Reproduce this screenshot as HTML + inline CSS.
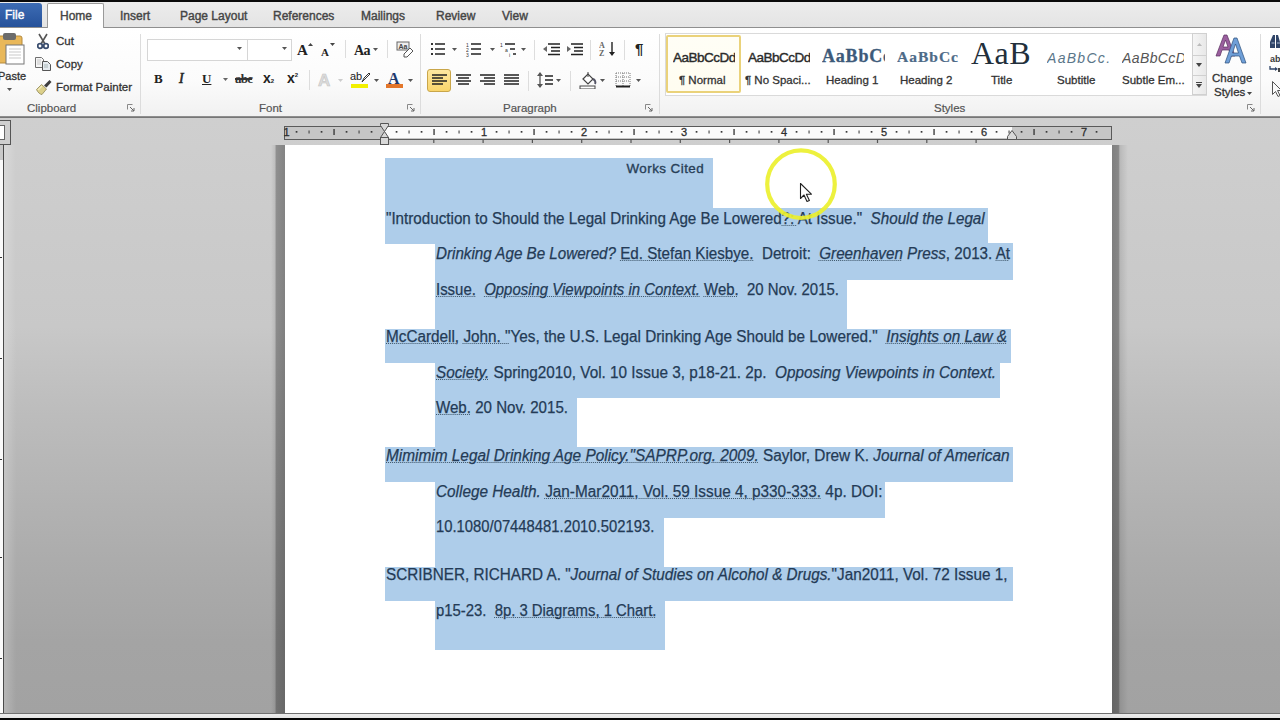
<!DOCTYPE html>
<html><head><meta charset="utf-8">
<style>
*{margin:0;padding:0;box-sizing:border-box}
html,body{width:1280px;height:720px;overflow:hidden;background:#000;font-family:"Liberation Sans",sans-serif}
.a{position:absolute}
#topbar{left:0;top:0;width:1280px;height:3px;background:#0a0a0a}
#tabs{left:0;top:2px;width:1280px;height:26px;background:linear-gradient(#ececec,#e4e4e4);border-bottom:1px solid #8f8f8f}
.tab{position:absolute;top:6px;font-size:12px;color:#454545;white-space:nowrap;-webkit-text-stroke:0.4px #454545}
#filetab{left:0;top:3px;width:42px;height:24px;background:linear-gradient(#3d6cb4,#25519a);border-radius:0 3px 0 0;color:#fff;font-size:12px;padding:5px 0 0 5px;-webkit-text-stroke:0.4px #fff}
#hometab{left:47px;top:3px;width:57px;height:26px;background:#fff;border:1px solid #9a9a9a;border-bottom:none;border-radius:2px 2px 0 0}
#ribbon{left:0;top:28px;width:1280px;height:89px;background:linear-gradient(#ffffff 0%,#fbfbfb 60%,#f1f1f1 100%)}
#ribbonbot{left:0;top:116px;width:1280px;height:2px;background:linear-gradient(#9a9a9a,#6a6a6a)}
.glabel{position:absolute;top:102px;font-size:11.5px;color:#555;-webkit-text-stroke:0.2px #555}
.sep{position:absolute;top:34px;width:1px;height:80px;background:#dcdcdc}
.rl{position:absolute;font-size:11.5px;color:#333;white-space:nowrap;-webkit-text-stroke:0.3px #333}
#canvas{left:0;top:118px;width:1280px;height:596px;background:linear-gradient(#cfcfcf 0%,#c8c8c8 35%,#bcbcbc 50%,#acacac 74%,#a4a4a4 88%,#a2a2a2 100%)}
#botbar{left:0;top:713px;width:1280px;height:7px;background:linear-gradient(#707070 0px,#707070 1px,#ededed 1px,#e4e4e4 5px,#050505 5px)}
#page{left:285px;top:145px;width:827px;height:569px;background:#fff}
#shadowL{left:271px;top:145px;width:14px;height:568px;background:linear-gradient(90deg,rgba(0,0,0,0) 0%,rgba(0,0,0,.08) 30%,rgba(0,0,0,.3) 35%,rgba(0,0,0,.36) 100%)}
#shadowR{left:1112px;top:145px;width:16px;height:568px;background:linear-gradient(90deg,rgba(0,0,0,.38) 0%,rgba(0,0,0,.34) 40%,rgba(0,0,0,.1) 50%,rgba(0,0,0,0) 100%)}
.hl{position:absolute;background:#aecdea}
.ln{position:absolute;font-size:15.6px;color:#243b56;white-space:pre;line-height:1.117;transform-origin:0 0;-webkit-text-stroke:0.25px #243b56}
.i{font-style:italic}
.w{text-decoration:underline dotted #3c5468;text-decoration-thickness:1.2px;text-underline-offset:1px}
</style></head><body>
<div class="a" id="topbar"></div>
<div class="a" id="tabs"></div>
<div class="a" id="filetab">File</div>
<div class="a" id="hometab"></div>
<div class="tab" style="left:60px;top:9px">Home</div>
<div class="tab" style="left:120px;top:9px">Insert</div>
<div class="tab" style="left:180px;top:9px">Page Layout</div>
<div class="tab" style="left:273px;top:9px">References</div>
<div class="tab" style="left:361px;top:9px">Mailings</div>
<div class="tab" style="left:436px;top:9px">Review</div>
<div class="tab" style="left:502px;top:9px">View</div>
<div class="a" id="ribbon"></div>
<div class="a" id="ribbonbot"></div>

<!-- ===== RIBBON CONTENT ===== -->
<!-- separators -->
<div class="sep" style="left:140px"></div>
<div class="sep" style="left:420px"></div>
<div class="sep" style="left:659px"></div>
<div class="sep" style="left:1260px"></div>
<!-- group labels -->
<div class="glabel" style="left:27px">Clipboard</div>
<div class="glabel" style="left:259px">Font</div>
<div class="glabel" style="left:503px">Paragraph</div>
<div class="glabel" style="left:934px">Styles</div>
<!-- dialog launchers -->
<svg class="a" style="left:127px;top:104px" width="8" height="8"><path d="M0.5 0.5h5M0.5 0.5v5" stroke="#888" fill="none"/><path d="M3 3l4 4M7 4v3h-3" stroke="#666" fill="none"/></svg>
<svg class="a" style="left:407px;top:104px" width="8" height="8"><path d="M0.5 0.5h5M0.5 0.5v5" stroke="#888" fill="none"/><path d="M3 3l4 4M7 4v3h-3" stroke="#666" fill="none"/></svg>
<svg class="a" style="left:645px;top:104px" width="8" height="8"><path d="M0.5 0.5h5M0.5 0.5v5" stroke="#888" fill="none"/><path d="M3 3l4 4M7 4v3h-3" stroke="#666" fill="none"/></svg>
<svg class="a" style="left:1247px;top:104px" width="8" height="8"><path d="M0.5 0.5h5M0.5 0.5v5" stroke="#888" fill="none"/><path d="M3 3l4 4M7 4v3h-3" stroke="#666" fill="none"/></svg>

<!-- Clipboard -->
<svg class="a" style="left:0;top:32px" width="28" height="34">
 <rect x="-2" y="4" width="24" height="27" rx="2" fill="#e9b85a" stroke="#b58a3c"/>
 <rect x="3" y="1" width="13" height="7" rx="2" fill="#6b6b6b"/>
 <rect x="6" y="13" width="18" height="19" fill="#fff" stroke="#777"/>
 <path d="M9 17h12M9 20h12M9 23h12M9 26h12" stroke="#c9c9c9"/>
</svg>
<div class="rl" style="left:-2px;top:70px;font-size:11px">Paste</div>
<svg class="a" style="left:7px;top:88px" width="6" height="4"><path d="M0 0h5l-2.5 3z" fill="#555"/></svg>
<svg class="a" style="left:37px;top:33px" width="12" height="17">
 <path d="M2 1l6 10M10 1l-6 10" stroke="#555" stroke-width="1.6"/>
 <circle cx="3" cy="13" r="2.3" fill="none" stroke="#3a4d6e" stroke-width="1.8"/>
 <circle cx="9" cy="13" r="2.3" fill="none" stroke="#3a4d6e" stroke-width="1.8"/>
</svg>
<div class="rl" style="left:56px;top:35px">Cut</div>
<svg class="a" style="left:34px;top:56px" width="18" height="16">
 <path d="M1.5 1.5h6l2 2v8h-8z" fill="#f6f6f6" stroke="#6f6f6f"/>
 <path d="M3 4h4M3 6h4M3 8h4" stroke="#bbb" stroke-width="0.8"/>
 <path d="M8.5 5.5h5l3 3v6h-8z" fill="#e6ebf0" stroke="#555"/>
 <path d="M10 9h4M10 11h4" stroke="#9aa" stroke-width="0.8"/>
</svg>
<div class="rl" style="left:56px;top:58px">Copy</div>
<svg class="a" style="left:35px;top:79px" width="18" height="16">
 <path d="M1.5 10.5l5-5 5 4.5-4.5 5.5c-2 0-4.5-2.5-5.5-5z" fill="#dcd08a" stroke="#8f8757" stroke-width="0.8"/>
 <path d="M3 11l4-4" stroke="#f3ecbf" stroke-width="1.2"/>
 <path d="M9 6.5l5.5-5.5 2 2-5 5.5z" fill="#3d3d3d"/>
</svg>
<div class="rl" style="left:56px;top:81px">Format Painter</div>

<!-- Font group -->
<div class="a" style="left:147px;top:39px;width:101px;height:22px;background:#fff;border:1px solid #d6d6d6"></div>
<div class="a" style="left:248px;top:39px;width:44px;height:22px;background:#fff;border:1px solid #d6d6d6;border-left:none"></div>
<svg class="a" style="left:237px;top:47px" width="6" height="4"><path d="M0 0h5l-2.5 3z" fill="#555"/></svg>
<svg class="a" style="left:282px;top:47px" width="6" height="4"><path d="M0 0h5l-2.5 3z" fill="#555"/></svg>
<div class="a" style="left:297px;top:42px;font:bold 15px 'Liberation Serif',serif;color:#222">A</div>
<svg class="a" style="left:308px;top:43px" width="6" height="4"><path d="M0 3h5l-2.5-3z" fill="#444"/></svg>
<div class="a" style="left:321px;top:46px;font:bold 11px 'Liberation Serif',serif;color:#222">A</div>
<svg class="a" style="left:330px;top:43px" width="6" height="4"><path d="M0 0h5l-2.5 3z" fill="#444"/></svg>
<div class="a" style="left:345px;top:40px;width:1px;height:18px;background:#ddd"></div>
<div class="a" style="left:354px;top:43px;font:bold 14px 'Liberation Serif',serif;color:#222;letter-spacing:-0.5px">Aa</div>
<svg class="a" style="left:373px;top:48px" width="6" height="4"><path d="M0 0h5l-2.5 3z" fill="#555"/></svg>
<div class="a" style="left:387px;top:40px;width:1px;height:18px;background:#ddd"></div>
<svg class="a" style="left:395px;top:40px" width="20" height="18">
 <rect x="2" y="2" width="12" height="8" fill="#eee" stroke="#666"/>
 <text x="3.5" y="9" font-size="7" font-family="Liberation Sans" font-weight="bold" fill="#444">Aa</text>
 <path d="M9 14l6-6 3 3-6 6h-3z" fill="#fff" stroke="#555"/>
</svg>
<div class="a" style="left:154px;top:71px;font:bold 13px 'Liberation Serif',serif;color:#222">B</div>
<div class="a" style="left:179px;top:71px;font:italic 14px 'Liberation Serif',serif;color:#222;-webkit-text-stroke:0.5px #222">I</div>
<div class="a" style="left:202px;top:71px;font:bold 13px 'Liberation Serif',serif;color:#222;text-decoration:underline">U</div>
<svg class="a" style="left:223px;top:78px" width="6" height="4"><path d="M0 0h5l-2.5 3z" fill="#666"/></svg>
<div class="a" style="left:235px;top:71px;font:bold 13px 'Liberation Serif',serif;color:#333;letter-spacing:-0.8px;text-decoration:line-through;text-decoration-thickness:1.5px">abc</div>
<div class="a" style="left:263px;top:70px;font:bold 14px 'Liberation Sans',sans-serif;color:#222">x<span style="font-size:6px">2</span></div>
<div class="a" style="left:287px;top:70px;font:bold 14px 'Liberation Sans',sans-serif;color:#222">x<span style="font-size:6px;vertical-align:6px">2</span></div>
<div class="a" style="left:309px;top:70px;width:1px;height:20px;background:#ddd"></div>
<div class="a" style="left:318px;top:71px;font:bold 17px 'Liberation Sans',sans-serif;color:#dcdcdc;-webkit-text-stroke:0.6px #c4c4c4">A</div>
<svg class="a" style="left:338px;top:79px" width="6" height="4"><path d="M0 0h5l-2.5 3z" fill="#ccc"/></svg>
<div class="a" style="left:350px;top:70px;font:11px 'Liberation Sans',sans-serif;color:#222">ab</div>
<svg class="a" style="left:361px;top:72px" width="9" height="11"><path d="M1 10l2-4 5-5 1 1-5 5z" fill="#fff" stroke="#333"/></svg>
<div class="a" style="left:351px;top:84px;width:17px;height:4px;background:#f2f000"></div>
<svg class="a" style="left:374px;top:79px" width="6" height="4"><path d="M0 0h5l-2.5 3z" fill="#555"/></svg>
<div class="a" style="left:388px;top:70px;font:bold 16px 'Liberation Serif',serif;color:#1f3a6e">A</div>
<div class="a" style="left:386px;top:84px;width:17px;height:4px;background:#e3762b"></div>
<svg class="a" style="left:408px;top:79px" width="6" height="4"><path d="M0 0h5l-2.5 3z" fill="#555"/></svg>

<!-- Paragraph group -->
<svg class="a" style="left:431px;top:42px" width="16" height="14"><path d="M0 1h2v2h-2zM0 6h2v2h-2zM0 11h2v2h-2z" fill="#333"/><path d="M4 2h10M4 7h10M4 12h10" stroke="#222" stroke-width="1.3"/></svg>
<svg class="a" style="left:452px;top:48px" width="6" height="4"><path d="M0 0h5l-2.5 3z" fill="#555"/></svg>
<svg class="a" style="left:466px;top:42px" width="17" height="15"><text x="0" y="5" font-size="5" font-family="Liberation Sans" fill="#333">1</text><text x="0" y="10" font-size="5" font-family="Liberation Sans" fill="#333">2</text><text x="0" y="15" font-size="5" font-family="Liberation Sans" fill="#333">3</text><path d="M5 2h10M5 7h10M5 12h10" stroke="#222" stroke-width="1.3"/></svg>
<svg class="a" style="left:490px;top:48px" width="6" height="4"><path d="M0 0h5l-2.5 3z" fill="#555"/></svg>
<svg class="a" style="left:500px;top:42px" width="18" height="16"><text x="0" y="5" font-size="5" font-family="Liberation Sans" fill="#333">1</text><text x="5" y="10" font-size="5" font-family="Liberation Sans" fill="#333">a</text><text x="9" y="15" font-size="5" font-family="Liberation Sans" fill="#333">i</text><path d="M5 2h10M10 7h5M13 12h3" stroke="#222" stroke-width="1.3"/></svg>
<svg class="a" style="left:521px;top:48px" width="6" height="4"><path d="M0 0h5l-2.5 3z" fill="#555"/></svg>
<div class="a" style="left:534px;top:40px;width:1px;height:20px;background:#ddd"></div>
<svg class="a" style="left:542px;top:41px" width="19" height="16"><path d="M6 3h12M9 6.5h9M9 10h9M6 13.5h12" stroke="#222" stroke-width="1.6"/><path d="M1 8l4-3v6z" fill="#666"/></svg>
<svg class="a" style="left:565px;top:41px" width="19" height="16"><path d="M6 3h12M9 6.5h9M9 10h9M6 13.5h12" stroke="#222" stroke-width="1.6"/><path d="M6 8l-4-3v6z" fill="#666"/></svg>
<div class="a" style="left:590px;top:40px;width:1px;height:20px;background:#ddd"></div>
<svg class="a" style="left:599px;top:41px" width="18" height="16"><text x="0" y="7" font-size="8" font-weight="bold" font-family="Liberation Serif" fill="#666">A</text><text x="0" y="15" font-size="8" font-weight="bold" font-family="Liberation Serif" fill="#666">Z</text><path d="M13 1v12" stroke="#222" stroke-width="1.4"/><path d="M10 11l3 4 3-4z" fill="#222"/></svg>
<div class="a" style="left:624px;top:40px;width:1px;height:20px;background:#ddd"></div>
<div class="a" style="left:635px;top:40px;font:bold 15px 'Liberation Sans',sans-serif;color:#222">¶</div>
<div class="a" style="left:427px;top:69px;width:24px;height:23px;background:linear-gradient(#fde7a1,#f9d56b);border:1px solid #c9a64a;border-radius:3px"></div>
<svg class="a" style="left:431px;top:73px" width="17" height="14"><path d="M1 2h15M1 5h11M1 8h15M1 11h11" stroke="#222" stroke-width="1.5"/></svg>
<svg class="a" style="left:455px;top:73px" width="17" height="14"><path d="M1 2h15M3 5h11M1 8h15M3 11h11" stroke="#222" stroke-width="1.5"/></svg>
<svg class="a" style="left:479px;top:73px" width="17" height="14"><path d="M1 2h15M5 5h11M1 8h15M5 11h11" stroke="#222" stroke-width="1.5"/></svg>
<svg class="a" style="left:503px;top:73px" width="17" height="14"><path d="M1 2h15M1 5h15M1 8h15M1 11h15" stroke="#222" stroke-width="1.5"/></svg>
<div class="a" style="left:528px;top:71px;width:1px;height:20px;background:#ddd"></div>
<svg class="a" style="left:537px;top:71px" width="18" height="18"><path d="M3 2v14" stroke="#555" stroke-width="1.3"/><path d="M0 5l3-4 3 4zM0 13l3 4 3-4z" fill="#555"/><path d="M8 5h8M8 9h8M8 13h8" stroke="#222" stroke-width="1.5"/></svg>
<svg class="a" style="left:556px;top:79px" width="6" height="4"><path d="M0 0h5l-2.5 3z" fill="#555"/></svg>
<div class="a" style="left:570px;top:71px;width:1px;height:20px;background:#ddd"></div>
<svg class="a" style="left:579px;top:71px" width="18" height="18"><path d="M4 8l5-5 5 5-5 5z" fill="#fff" stroke="#444" stroke-width="1.2"/><path d="M9 1v5" stroke="#444"/><path d="M14 8c2 1 3 3 2 5" stroke="#556" stroke-width="2" fill="none"/><rect x="1" y="15" width="15" height="3" fill="#fff" stroke="#444"/></svg>
<svg class="a" style="left:600px;top:79px" width="6" height="4"><path d="M0 0h5l-2.5 3z" fill="#555"/></svg>
<svg class="a" style="left:615px;top:72px" width="16" height="16"><path d="M1 1h14M1 5h14M1 9h14M1 1v14M8 1v14M15 1v14" stroke="#777" stroke-dasharray="1 1" fill="none"/><path d="M1 14.5h14" stroke="#222" stroke-width="2"/></svg>
<svg class="a" style="left:636px;top:79px" width="6" height="4"><path d="M0 0h5l-2.5 3z" fill="#555"/></svg>

<!-- Styles gallery -->
<div class="a" style="left:665px;top:33px;width:542px;height:63px;background:#fff;border:1px solid #dadada"></div>
<div class="a" style="left:666px;top:35px;width:75px;height:58px;background:linear-gradient(#fffef6,#fffdf0);border:2px solid #ead27a;border-radius:2px"></div>
<div class="a" style="left:673px;top:50px;width:62px;overflow:hidden;white-space:nowrap;font:13.5px 'Liberation Sans',sans-serif;color:#2a2a2a;letter-spacing:-0.5px;-webkit-text-stroke:0.4px #2a2a2a">AaBbCcDd</div>
<div class="rl" style="left:679px;top:74px">¶ Normal</div>
<div class="a" style="left:748px;top:50px;width:62px;overflow:hidden;white-space:nowrap;font:13.5px 'Liberation Sans',sans-serif;color:#2a2a2a;letter-spacing:-0.5px;-webkit-text-stroke:0.4px #2a2a2a">AaBbCcDd</div>
<div class="rl" style="left:745px;top:74px">¶ No Spaci...</div>
<div class="a" style="left:822px;top:46px;width:63px;overflow:hidden;white-space:nowrap;font:bold 18px 'Liberation Serif',serif;color:#3d5a7a;letter-spacing:0.8px;-webkit-text-stroke:0.3px #3d5a7a">AaBbCc</div>
<div class="rl" style="left:826px;top:74px">Heading 1</div>
<div class="a" style="left:897px;top:48px;width:62px;overflow:hidden;white-space:nowrap;font:bold 15.5px 'Liberation Serif',serif;color:#4e6b88;letter-spacing:1px;-webkit-text-stroke:0.2px #4e6b88">AaBbCc</div>
<div class="rl" style="left:900px;top:74px">Heading 2</div>
<div class="a" style="left:971px;top:35px;width:63px;overflow:hidden;white-space:nowrap;font:32px 'Liberation Serif',serif;color:#222f3b;letter-spacing:0.5px">AaB</div>
<div class="rl" style="left:991px;top:74px">Title</div>
<div class="a" style="left:1047px;top:50px;width:62px;overflow:hidden;white-space:nowrap;font:italic 14px 'Liberation Sans',sans-serif;color:#5a7689;letter-spacing:1.3px">AaBbCc.</div>
<div class="rl" style="left:1057px;top:74px">Subtitle</div>
<div class="a" style="left:1122px;top:50px;width:62px;overflow:hidden;white-space:nowrap;font:italic 14px 'Liberation Sans',sans-serif;color:#555;letter-spacing:0.4px">AaBbCcDd</div>
<div class="rl" style="left:1122px;top:74px">Subtle Em...</div>
<div class="a" style="left:1192px;top:33px;width:15px;height:62px;background:linear-gradient(90deg,#f5f5f5,#e8e8e8);border:1px solid #d0d0d0"></div>
<div class="a" style="left:1192px;top:55px;width:15px;height:1px;background:#d0d0d0"></div>
<div class="a" style="left:1192px;top:75px;width:15px;height:1px;background:#d0d0d0"></div>
<svg class="a" style="left:1197px;top:43px" width="6" height="4"><path d="M0 3h5l-2.5-3z" fill="#bbb"/></svg>
<svg class="a" style="left:1196px;top:63px" width="7" height="5"><path d="M0 0h6l-3 4z" fill="#444"/></svg>
<svg class="a" style="left:1196px;top:82px" width="7" height="7"><path d="M0 0.5h6" stroke="#444"/><path d="M0 2h6l-3 4z" fill="#444"/></svg>
<!-- Change styles -->
<svg class="a" style="left:1215px;top:34px" width="36" height="31">
 <path d="M1 22h4l2-6h7l2 6h4l-8-21h-3z M8 13l2.5-7 2.5 7z" fill="#9a5f9e" stroke="#5a2e5e" stroke-width="0.7"/>
 <path d="M10 29h4l2.5-7h8l2.5 7h4l-9-25h-3z M17.5 19l3-9 3 9z" fill="#6f9fd8" stroke="#2d4f7a" stroke-width="0.7"/>
</svg>
<div class="rl" style="left:1212px;top:72px">Change</div>
<div class="rl" style="left:1214px;top:86px">Styles</div><svg class="a" style="left:1247px;top:92px" width="6" height="4"><path d="M0 0h5l-2.5 3z" fill="#444"/></svg>
<!-- Editing (cut off) -->
<svg class="a" style="left:1269px;top:34px" width="11" height="15"><path d="M1 14v-6l3-7h2v13z" fill="#2f4468"/><path d="M7 14v-13h2l2 7v6z" fill="#2f4468"/><path d="M2.5 9h3M8 9h3" stroke="#a9b8d0" stroke-width="1.2"/></svg>
<div class="a" style="left:1270px;top:54px;font:bold 9px 'Liberation Sans',sans-serif;color:#3a3a3a">ab</div>
<svg class="a" style="left:1269px;top:65px" width="11" height="8"><path d="M1 1v3h6" stroke="#2f4468" fill="none" stroke-width="1.3"/><path d="M6 2l3 2-3 2z" fill="#2f4468"/><rect x="9" y="3" width="2" height="4" fill="#444"/></svg>
<svg class="a" style="left:1271px;top:80px" width="10" height="17"><path d="M1.5 1.5v13l3-3 2.5 5 2-1-2.5-5h4z" fill="#fafafa" stroke="#555" stroke-width="1"/></svg>


<div class="a" id="canvas"></div>
<div class="a" id="shadowL"></div>
<div class="a" id="shadowR"></div>
<div class="a" id="page"></div>

<!-- highlights -->
<div class="hl" style="left:385px;top:158px;width:328px;height:50px"></div>
<div class="hl" style="left:385px;top:208px;width:603px;height:36px"></div>
<div class="hl" style="left:435px;top:243px;width:578px;height:37px"></div>
<div class="hl" style="left:435px;top:279px;width:412px;height:50px"></div>
<div class="hl" style="left:385px;top:329px;width:626px;height:34px"></div>
<div class="hl" style="left:435px;top:363px;width:565px;height:35px"></div>
<div class="hl" style="left:435px;top:398px;width:142px;height:50px"></div>
<div class="hl" style="left:385px;top:447px;width:628px;height:35px"></div>
<div class="hl" style="left:435px;top:482px;width:450px;height:36px"></div>
<div class="hl" style="left:435px;top:517px;width:229px;height:50px"></div>
<div class="hl" style="left:385px;top:567px;width:628px;height:34px"></div>
<div class="hl" style="left:435px;top:601px;width:230px;height:49px"></div>

<div class="ln" style="left:385.50px;top:209.63px;transform:scaleX(0.9743)">"Introduction to Should the Legal Drinking Age Be Lowered<span class="w">?: </span>At Issue."  <span class="i">Should the Legal</span></div>
<div class="ln" style="left:435.50px;top:245.13px;transform:scaleX(0.9732)"><span class="i">Drinking Age Be Lowered?</span> <span class="w">Ed. Stefan Kiesbye.</span>  Detroit:  <span class="i w">Greenhaven</span><span class="i"> Press</span>, 2013. <span class="w">At</span></div>
<div class="ln" style="left:435.50px;top:280.63px;transform:scaleX(0.9583)"><span class="w">Issue.</span>  <span class="i w">Opposing Viewpoints in Context.</span> <span class="w">Web.</span>  20 Nov. 2015.</div>
<div class="ln" style="left:385.50px;top:328.38px;transform:scaleX(0.9812)"><span class="w">McCardell,</span> <span class="w">John. "</span>Yes, the U.S. Legal Drinking Age Should be Lowered."  <span class="i w">Insights on Law &amp;</span></div>
<div class="ln" style="left:435.50px;top:363.88px;transform:scaleX(0.9811)"><span class="i w">Society.</span> Spring2010, Vol. 10 Issue 3, p18-21. 2p.  <span class="i">Opposing Viewpoints in Context.</span></div>
<div class="ln" style="left:435.50px;top:399.38px;transform:scaleX(0.9677)"><span class="w">Web.</span> 20 Nov. 2015.</div>
<div class="ln" style="left:385.50px;top:447.38px;transform:scaleX(0.9863)"><span class="i w">Mimimim Legal Drinking Age Policy."SAPRP.org. 2009.</span> Saylor, Drew K. <span class="i">Journal of American</span></div>
<div class="ln" style="left:435.50px;top:482.88px;transform:scaleX(0.9835)"><span class="i">College Health.</span> <span class="w">Jan-Mar2011, Vol. 59 Issue 4, p330-333.</span> 4p. DOI:</div>
<div class="ln" style="left:435.50px;top:518.38px;transform:scaleX(0.9497)">10.1080/07448481.2010.502193.</div>
<div class="ln" style="left:385.50px;top:566.13px;transform:scaleX(0.9798)">SCRIBNER, RICHARD A. "<span class="i">Journal of Studies on Alcohol &amp; Drugs.</span>"Jan2011, Vol. 72 Issue 1,</div>
<div class="ln" style="left:435.50px;top:601.63px;transform:scaleX(0.9527)">p15-23.  <span class="w">8p. 3 Diagrams, 1 Chart.</span></div>

<!-- horizontal ruler -->
<div class="a" style="left:284px;top:125.5px;width:828px;height:14px;background:#c6c6c6;border-top:1.5px solid #5a5a5a;border-bottom:1.5px solid #5a5a5a"></div>
<div class="a" style="left:385px;top:127px;width:627px;height:11px;background:#fbfbfb"></div>
<div class="a" style="left:284px;top:126px;width:1px;height:13px;background:#5a5a5a"></div>
<div class="a" style="left:1111px;top:126px;width:1px;height:13px;background:#5a5a5a"></div>
<svg class="a" style="left:0;top:119px" width="1280" height="30"><rect x="295.70" y="12" width="1.7" height="1.7" fill="#3a3a3a"/><rect x="308.50" y="11.5" width="1.1" height="3" fill="#444"/><rect x="320.70" y="12" width="1.7" height="1.7" fill="#3a3a3a"/><rect x="333.40" y="10" width="1.3" height="6" fill="#333"/><rect x="345.70" y="12" width="1.7" height="1.7" fill="#3a3a3a"/><rect x="358.50" y="11.5" width="1.1" height="3" fill="#444"/><rect x="370.70" y="12" width="1.7" height="1.7" fill="#3a3a3a"/><rect x="395.70" y="12" width="1.7" height="1.7" fill="#3a3a3a"/><rect x="408.50" y="11.5" width="1.1" height="3" fill="#444"/><rect x="420.70" y="12" width="1.7" height="1.7" fill="#3a3a3a"/><rect x="433.40" y="10" width="1.3" height="6" fill="#333"/><rect x="445.70" y="12" width="1.7" height="1.7" fill="#3a3a3a"/><rect x="458.50" y="11.5" width="1.1" height="3" fill="#444"/><rect x="470.70" y="12" width="1.7" height="1.7" fill="#3a3a3a"/><text x="484.00" y="17" font-size="11" font-family="Liberation Sans" text-anchor="middle" fill="#2e2e2e" stroke="#2e2e2e" stroke-width="0.3">1</text><rect x="495.70" y="12" width="1.7" height="1.7" fill="#3a3a3a"/><rect x="508.50" y="11.5" width="1.1" height="3" fill="#444"/><rect x="520.70" y="12" width="1.7" height="1.7" fill="#3a3a3a"/><rect x="533.40" y="10" width="1.3" height="6" fill="#333"/><rect x="545.70" y="12" width="1.7" height="1.7" fill="#3a3a3a"/><rect x="558.50" y="11.5" width="1.1" height="3" fill="#444"/><rect x="570.70" y="12" width="1.7" height="1.7" fill="#3a3a3a"/><text x="584.00" y="17" font-size="11" font-family="Liberation Sans" text-anchor="middle" fill="#2e2e2e" stroke="#2e2e2e" stroke-width="0.3">2</text><rect x="595.70" y="12" width="1.7" height="1.7" fill="#3a3a3a"/><rect x="608.50" y="11.5" width="1.1" height="3" fill="#444"/><rect x="620.70" y="12" width="1.7" height="1.7" fill="#3a3a3a"/><rect x="633.40" y="10" width="1.3" height="6" fill="#333"/><rect x="645.70" y="12" width="1.7" height="1.7" fill="#3a3a3a"/><rect x="658.50" y="11.5" width="1.1" height="3" fill="#444"/><rect x="670.70" y="12" width="1.7" height="1.7" fill="#3a3a3a"/><text x="684.00" y="17" font-size="11" font-family="Liberation Sans" text-anchor="middle" fill="#2e2e2e" stroke="#2e2e2e" stroke-width="0.3">3</text><rect x="695.70" y="12" width="1.7" height="1.7" fill="#3a3a3a"/><rect x="708.50" y="11.5" width="1.1" height="3" fill="#444"/><rect x="720.70" y="12" width="1.7" height="1.7" fill="#3a3a3a"/><rect x="733.40" y="10" width="1.3" height="6" fill="#333"/><rect x="745.70" y="12" width="1.7" height="1.7" fill="#3a3a3a"/><rect x="758.50" y="11.5" width="1.1" height="3" fill="#444"/><rect x="770.70" y="12" width="1.7" height="1.7" fill="#3a3a3a"/><text x="784.00" y="17" font-size="11" font-family="Liberation Sans" text-anchor="middle" fill="#2e2e2e" stroke="#2e2e2e" stroke-width="0.3">4</text><rect x="795.70" y="12" width="1.7" height="1.7" fill="#3a3a3a"/><rect x="808.50" y="11.5" width="1.1" height="3" fill="#444"/><rect x="820.70" y="12" width="1.7" height="1.7" fill="#3a3a3a"/><rect x="833.40" y="10" width="1.3" height="6" fill="#333"/><rect x="845.70" y="12" width="1.7" height="1.7" fill="#3a3a3a"/><rect x="858.50" y="11.5" width="1.1" height="3" fill="#444"/><rect x="870.70" y="12" width="1.7" height="1.7" fill="#3a3a3a"/><text x="884.00" y="17" font-size="11" font-family="Liberation Sans" text-anchor="middle" fill="#2e2e2e" stroke="#2e2e2e" stroke-width="0.3">5</text><rect x="895.70" y="12" width="1.7" height="1.7" fill="#3a3a3a"/><rect x="908.50" y="11.5" width="1.1" height="3" fill="#444"/><rect x="920.70" y="12" width="1.7" height="1.7" fill="#3a3a3a"/><rect x="933.40" y="10" width="1.3" height="6" fill="#333"/><rect x="945.70" y="12" width="1.7" height="1.7" fill="#3a3a3a"/><rect x="958.50" y="11.5" width="1.1" height="3" fill="#444"/><rect x="970.70" y="12" width="1.7" height="1.7" fill="#3a3a3a"/><text x="984.00" y="17" font-size="11" font-family="Liberation Sans" text-anchor="middle" fill="#2e2e2e" stroke="#2e2e2e" stroke-width="0.3">6</text><rect x="995.70" y="12" width="1.7" height="1.7" fill="#3a3a3a"/><rect x="1008.50" y="11.5" width="1.1" height="3" fill="#444"/><rect x="1020.70" y="12" width="1.7" height="1.7" fill="#3a3a3a"/><rect x="1033.40" y="10" width="1.3" height="6" fill="#333"/><rect x="1045.70" y="12" width="1.7" height="1.7" fill="#3a3a3a"/><rect x="1058.50" y="11.5" width="1.1" height="3" fill="#444"/><rect x="1070.70" y="12" width="1.7" height="1.7" fill="#3a3a3a"/><text x="1084.00" y="17" font-size="11" font-family="Liberation Sans" text-anchor="middle" fill="#2e2e2e" stroke="#2e2e2e" stroke-width="0.3">7</text><rect x="1095.70" y="12" width="1.7" height="1.7" fill="#3a3a3a"/><text x="286.5" y="17" font-size="11" font-family="Liberation Sans" text-anchor="middle" fill="#2e2e2e" stroke="#2e2e2e" stroke-width="0.3">1</text><rect x="433.20" y="20" width="1.2" height="4" fill="#555"/><rect x="482.50" y="20" width="1.2" height="4" fill="#555"/><rect x="531.80" y="20" width="1.2" height="4" fill="#555"/><rect x="581.10" y="20" width="1.2" height="4" fill="#555"/><rect x="630.40" y="20" width="1.2" height="4" fill="#555"/><rect x="679.70" y="20" width="1.2" height="4" fill="#555"/><rect x="729.00" y="20" width="1.2" height="4" fill="#555"/><rect x="778.30" y="20" width="1.2" height="4" fill="#555"/><rect x="827.60" y="20" width="1.2" height="4" fill="#555"/><rect x="876.90" y="20" width="1.2" height="4" fill="#555"/><rect x="926.20" y="20" width="1.2" height="4" fill="#555"/><rect x="975.50" y="20" width="1.2" height="4" fill="#555"/></svg>
<svg class="a" style="left:379px;top:122px" width="11" height="24">
 <path d="M1.5 1.5h8v2l-4 6-4-6z" fill="#d8d8d8" stroke="#555"/>
 <path d="M5.5 9.5l4 6v0h-8v0z" fill="#d8d8d8" stroke="#555"/>
 <rect x="1.5" y="15.5" width="8" height="7" fill="#d8d8d8" stroke="#555"/>
</svg>
<svg class="a" style="left:1006px;top:129px" width="12" height="12">
 <path d="M6 1.5l4.5 6v3h-9v-3z" fill="#d8d8d8" stroke="#555"/>
</svg>
<!-- vertical ruler + tab selector -->
<div class="a" style="left:0;top:120px;width:11px;height:25px;background:#cfcfcf;border:1px solid #555;border-left:none"></div>
<div class="a" style="left:0;top:125px;width:5px;height:15px;background:#fff;border:1px solid #666;border-left:none"></div>
<div class="a" style="left:4px;top:145px;width:12px;height:568px;background:linear-gradient(90deg,rgba(255,255,255,.22),rgba(255,255,255,0))"></div>
<div class="a" style="left:0;top:145px;width:4px;height:568px;background:#fafafa;border-right:1px solid #4a4a4a"></div>
<div class="a" style="left:0;top:145px;width:3px;height:15px;background:#c9c9c9"></div>
<div class="a" style="left:0;top:257px;width:2px;height:1px;background:#333"></div><div class="a" style="left:0;top:358px;width:2px;height:1px;background:#333"></div><div class="a" style="left:0;top:459px;width:2px;height:1px;background:#333"></div><div class="a" style="left:0;top:557px;width:2px;height:1px;background:#333"></div><div class="a" style="left:0;top:658px;width:2px;height:1px;background:#333"></div>
<!-- works cited -->
<div class="a" style="left:626.5px;top:161px;font:13.4px 'Liberation Sans',sans-serif;color:#283f58;white-space:nowrap;letter-spacing:0.45px;-webkit-text-stroke:0.35px #283f58">Works Cited</div>
<!-- cursor circle + arrow -->
<svg class="a" style="left:760px;top:143px" width="82" height="82">
 <circle cx="41" cy="41.2" r="33.8" fill="none" stroke="#ecf02e" stroke-opacity="0.92" stroke-width="4.2"/>
</svg>
<svg class="a" style="left:799px;top:182px" width="14" height="21">
 <path d="M1.5 1.5v15l3.5-3.5 3 6.5 2.4-1-3-6.3h5z" fill="#fff" stroke="#222" stroke-width="1.1" stroke-linejoin="round"/>
</svg>
<div class="a" id="botbar"></div>
</body></html>
